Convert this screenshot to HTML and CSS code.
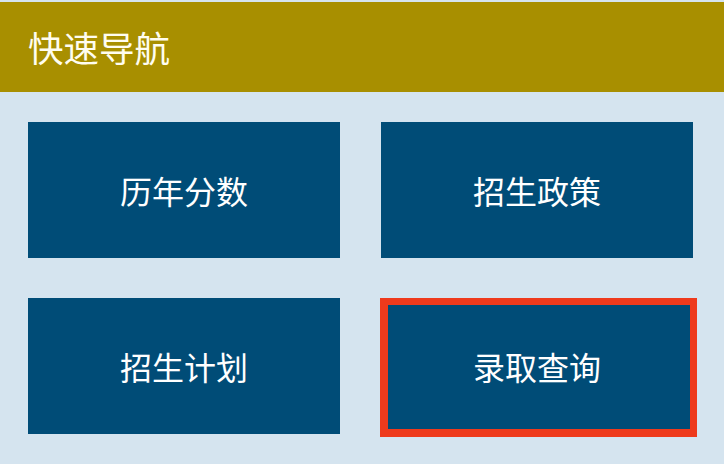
FILE: index.html
```html
<!DOCTYPE html>
<html lang="zh-CN">
<head>
<meta charset="utf-8">
<title>快速导航</title>
<link rel="stylesheet" href="styles.css">
</head>
<body>
<div class="page">
  <div class="header">快速导航</div>
  <div class="grid">
    <a class="tile">历年分数</a>
    <a class="tile">招生政策</a>
    <a class="tile">招生计划</a>
    <a class="tile tile-marked">录取查询</a>
  </div>
</div>
</body>
</html>
```
FILE: styles.css
```css
html, body {
  margin: 0;
  padding: 0;
  background: #d5e4ef;
}
.page {
  width: 724px;
  height: 464px;
  padding-top: 2px;
  box-sizing: border-box;
  font-family: "Noto Sans CJK SC", "Noto Sans", sans-serif;
}
.header {
  height: 90px;
  background: #a88f00;
  color: #fffdf0;
  font-size: 35.5px;
  display: flex;
  align-items: center;
  padding-left: 28px;
  padding-bottom: 2px;
  box-sizing: border-box;
}
.grid {
  display: grid;
  grid-template-columns: 312px 312px;
  grid-auto-rows: 136px;
  column-gap: 41px;
  row-gap: 40px;
  padding: 30px 0 0 28px;
}
.tile {
  position: relative;
  background: #004c77;
  color: #ffffff;
  font-size: 32px;
  display: flex;
  align-items: center;
  justify-content: center;
  text-decoration: none;
}
.tile-marked::after {
  content: "";
  position: absolute;
  left: -1px;
  top: 0;
  right: -4px;
  bottom: -3px;
  border: 7px solid #ee3a1c;
  border-left-width: 8px;
  border-bottom-width: 8px;
}
```
